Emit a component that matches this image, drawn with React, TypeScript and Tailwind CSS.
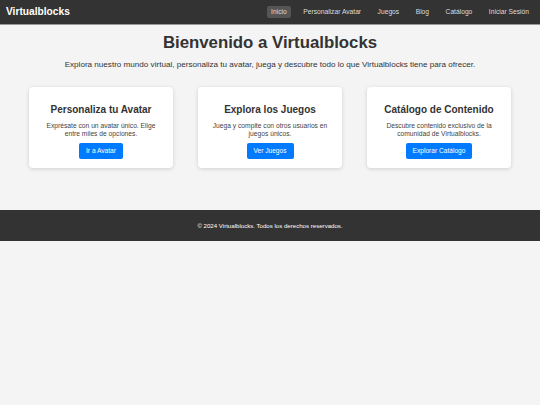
import React from "react";

const cards = [
  {
    title: "Personaliza tu Avatar",
    desc: "Exprésate con un avatar único. Elige entre miles de opciones.",
    btn: "Ir a Avatar",
  },
  {
    title: "Explora los Juegos",
    desc: "Juega y compite con otros usuarios en juegos únicos.",
    btn: "Ver Juegos",
  },
  {
    title: "Catálogo de Contenido",
    desc: "Descubre contenido exclusivo de la comunidad de Virtualblocks.",
    btn: "Explorar Catálogo",
  },
];

const links = ["Inicio", "Personalizar Avatar", "Juegos", "Blog", "Catálogo", "Iniciar Sesión"];

export default function App() {
  return (
    <div className="min-h-[405px] bg-[#f4f4f4] text-[#333] font-['Liberation_Sans',Arial,sans-serif]">
      <nav className="h-[25px] bg-[#333] border-b border-[#999] flex items-center justify-between pl-[6px] pr-[7px]">
        <div className="text-white font-bold text-[10.2px] leading-none">Virtualblocks</div>
        <div className="flex items-center gap-[8.5px]">
          {links.map((l, i) => (
            <span
              key={l}
              className={`text-[6.7px] leading-[12px] px-[4px] rounded-[2px] text-[#ddd] ${i === 0 ? "bg-[#555]" : ""}`}
            >
              {l}
            </span>
          ))}
        </div>
      </nav>
      <main className="flex flex-col items-center pt-[8px] pb-[42px]">
        <h1 className="text-[16.8px] font-bold leading-[20px] text-[#333]">Bienvenido a Virtualblocks</h1>
        <p className="text-[8.1px] mt-[7px] leading-[10px] text-[#333]">
          Explora nuestro mundo virtual, personaliza tu avatar, juega y descubre todo lo que Virtualblocks tiene para ofrecer.
        </p>
        <div className="flex gap-[25px] mt-[17px]">
          {cards.map((c) => (
            <div
              key={c.title}
              className="w-[144px] h-[81px] bg-white rounded-[4px] shadow-[0_1px_4px_rgba(0,0,0,0.15)] flex flex-col items-center pt-[17px] px-[10px]"
            >
              <h2 className="text-[10px] font-bold leading-[12px] text-[#333]">{c.title}</h2>
              <p className="text-[6.7px] leading-[8px] text-center mt-[6px] text-[#444]">{c.desc}</p>
              <button className="mt-[5px] h-[16px] px-[7px] bg-[#007bff] text-white text-[6.6px] rounded-[2px] leading-none">
                {c.btn}
              </button>
            </div>
          ))}
        </div>
      </main>
      <footer className="h-[31px] bg-[#333] flex items-center justify-center">
        <span className="text-white text-[6.1px]">© 2024 Virtualblocks. Todos los derechos reservados.</span>
      </footer>
    </div>
  );
}
